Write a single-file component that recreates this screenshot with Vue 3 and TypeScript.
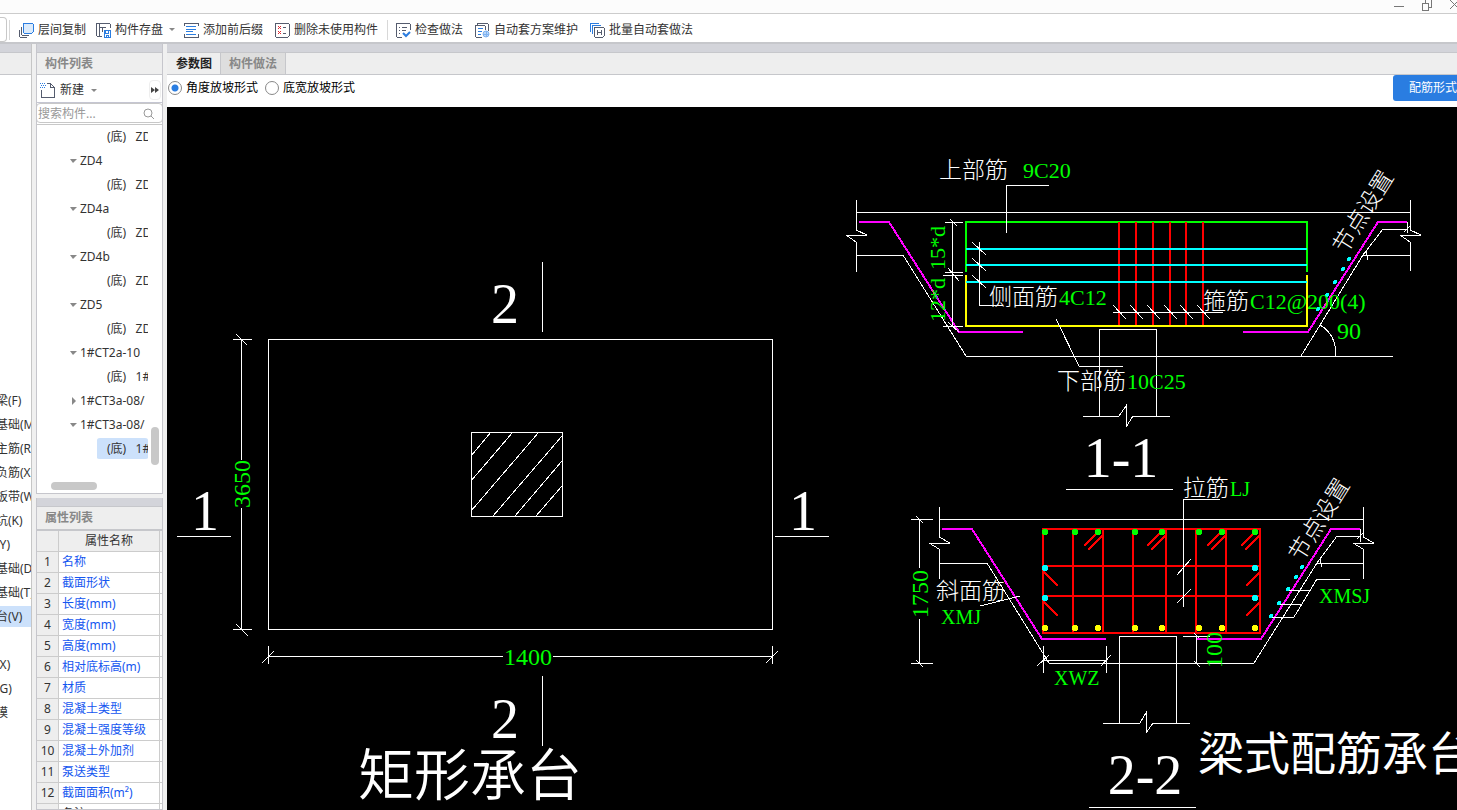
<script setup lang="ts">
import { ref } from 'vue'

interface TreeRow { label: string; kind: 'open' | 'closed' | 'leaf'; selected?: boolean }
interface Note { x: number; y: number; text: string; cls: string; rotate?: number }

const modules = ['梁(F)', '基础(M)', '主筋(R)', '负筋(X)', '板带(W)', '坑(K)', '(Y)', '基础(D)', '基础(T)', '台(V)', '', '(X)', '(G)', '模']

const tree: TreeRow[] = [
  { label: '(底)   ZD', kind: 'leaf' },
  { label: 'ZD4', kind: 'open' },
  { label: '(底)   ZD', kind: 'leaf' },
  { label: 'ZD4a', kind: 'open' },
  { label: '(底)   ZD', kind: 'leaf' },
  { label: 'ZD4b', kind: 'open' },
  { label: '(底)   ZD', kind: 'leaf' },
  { label: 'ZD5', kind: 'open' },
  { label: '(底)   ZD', kind: 'leaf' },
  { label: '1#CT2a-10', kind: 'open' },
  { label: '(底)   1#', kind: 'leaf' },
  { label: '1#CT3a-08/', kind: 'closed' },
  { label: '1#CT3a-08/', kind: 'open' },
  { label: '(底)   1#', kind: 'leaf', selected: true },
]

const props = ['名称', '截面形状', '长度(mm)', '宽度(mm)', '高度(mm)', '相对底标高(m)', '材质', '混凝土类型', '混凝土强度等级', '混凝土外加剂', '泵送类型', '截面面积(m²)', '备注']

const slope = ref('angle')
const search = ref('')

const stirrups = [1119, 1136, 1153, 1170, 1186, 1203]
const sideBars = [249, 265, 282]
const legs = [1073, 1103, 1133, 1166, 1196, 1226]
const barXs = [1045, 1075, 1098, 1135, 1162, 1199, 1222, 1255]
const hooks = [1103, 1166, 1226, 1260]
const slopeDots1 = [[1349, 259], [1343, 269], [1335, 282], [1327, 295], [1318, 309]]
const slopeDots2 = [[1302, 567], [1296, 577], [1288, 589], [1279, 603], [1271, 616]]
const sideDots = [[1045, 568], [1045, 598], [1255, 568], [1255, 598]]

const notes: Note[] = [
  { x: 505, y: 323, text: '2', cls: 'mark' },
  { x: 505, y: 738, text: '2', cls: 'mark' },
  { x: 205, y: 530, text: '1', cls: 'mark' },
  { x: 803, y: 530, text: '1', cls: 'mark' },
  { x: 1121, y: 477, text: '1-1', cls: 'mark' },
  { x: 1145, y: 794, text: '2-2', cls: 'mark' },
  { x: 528, y: 665, text: '1400', cls: 'dim' },
  { x: 250, y: 484, text: '3650', cls: 'dim', rotate: -90 },
  { x: 928, y: 594, text: '1750', cls: 'dim', rotate: -90 },
  { x: 1222, y: 650, text: '100', cls: 'dim', rotate: -90 },
  { x: 1349, y: 339, text: '90', cls: 'dim' },
  { x: 945, y: 248, text: '15*d', cls: 'code mid', rotate: -90 },
  { x: 945, y: 300, text: '12*d', cls: 'code mid', rotate: -90 },
  { x: 939, y: 178, text: '上部筋', cls: 'han' },
  { x: 1023, y: 178, text: '9C20', cls: 'code' },
  { x: 989, y: 305, text: '侧面筋', cls: 'han' },
  { x: 1059, y: 305, text: '4C12', cls: 'code' },
  { x: 1203, y: 309, text: '箍筋', cls: 'han' },
  { x: 1250, y: 309, text: 'C12@200(4)', cls: 'code' },
  { x: 1057, y: 389, text: '下部筋', cls: 'han' },
  { x: 1127, y: 389, text: '10C25', cls: 'code' },
  { x: 1183, y: 496, text: '拉筋', cls: 'han' },
  { x: 1230, y: 496, text: 'LJ', cls: 'tag' },
  { x: 936, y: 599, text: '斜面筋', cls: 'han' },
  { x: 941, y: 624, text: 'XMJ', cls: 'tag' },
  { x: 1054, y: 685, text: 'XWZ', cls: 'tag' },
  { x: 1319, y: 603, text: 'XMSJ', cls: 'tag' },
  { x: 1370, y: 216, text: '节点设置', cls: 'han mid', rotate: -58 },
  { x: 1326, y: 524, text: '节点设置', cls: 'han mid', rotate: -58 },
  { x: 358, y: 795, text: '矩形承台', cls: 'title' },
  { x: 1198, y: 770, text: '梁式配筋承台', cls: 'name' },
]
</script>

<template>
  <div class="app">
    <header class="titlebar">
      <button aria-label="最小化"><svg width="12" height="12"><path d="M1 6H11" /></svg></button>
      <button aria-label="还原"><svg width="12" height="12"><path d="M1 3H7V10H1ZM4 3V-1H10V7H7" /></svg></button>
      <button aria-label="关闭"><svg width="12" height="12"><path d="M1 0L10 9M10 0L1 9" /></svg></button>
    </header>

    <nav class="toolbar">
      <span class="stub"></span><span class="sep first"></span>
      <button class="tool copy">
        <svg width="16" height="16" class="ic"><path d="M3 5V12L4 13H11M1 8V14L2 15H9" /><rect class="bf" x="5" y="1" width="10" height="10" rx="1" /></svg>层间复制
      </button>
      <button class="tool store">
        <svg width="16" height="16" class="ic"><path d="M7 14H2L1 13V2L2 1H14L15 2V6M4 1V14M4 5H11M7 5V10" /><path class="b" d="M9 8H15V15H9ZM10 9V11H13V9M11 15V13H13V15" /></svg>构件存盘<i class="caret"></i>
      </button>
      <button class="tool affix">
        <svg width="16" height="16" class="ic"><path d="M1 4V1H15V4M1 12V15H15V12" /><path class="b" d="M3 4H13M3 7H13M3 9H10M3 12H13" /></svg>添加前后缀
      </button>
      <button class="tool del">
        <svg width="16" height="16" class="ic"><path d="M2 1H14L15 2V14L14 15H2L1 14V2ZM9 5H12M9 11H12" /><path class="r" d="M4 4L7 7M7 4L4 7M4 9L7 12M7 9L4 12" /></svg>删除未使用构件
      </button>
      <span class="sep"></span>
      <button class="tool">
        <svg width="16" height="16" class="ic"><path d="M7 15H2L1 14V2L2 1H14L15 2V8M4 5H5M7 5H12M4 8H5M7 8H11M4 11H5" /><path class="b w" d="M8 11L11 14L15 10" /></svg>检查做法
      </button>
      <button class="tool">
        <svg width="16" height="16" class="ic"><path d="M8 15H2L1 14V4L2 3H10L11 4V8M3 3V1H13L14 2V9" /><path class="b" d="M4 6H9M4 9H8M4 12H7" /><circle class="bl" cx="12" cy="12" r="3" /><path class="lt" d="M12 9V15M9 12H15" /></svg>自动套方案维护
      </button>
      <button class="tool">
        <svg width="16" height="16" class="ic"><path class="b" d="M1 10V1H10M3 12V3H12" /><path d="M6 5H14L15 6V14L14 15H6L5 14V6ZM8 8V13M12 8V13M8 10H12" /></svg>批量自动套做法
      </button>
    </nav>

    <main class="work">
      <aside class="dock modules">
        <div class="band"></div>
        <div class="head"></div>
        <ul>
          <li v-for="(m, i) in modules" :key="i" :class="{ on: i === 9 }">{{ m }}</li>
        </ul>
      </aside>

      <aside class="side">
        <section class="dock list">
          <div class="band"></div>
          <h2 class="head">构件列表</h2>
          <div class="newbar">
            <button class="tool">
              <svg width="16" height="16" class="ic"><path d="M1 8V15H14V5L10 1H7M10 1V5H14" /><path class="b dots" d="M0 1H6M1 3H6M0 5H6" /></svg>新建<i class="caret"></i>
            </button>
            <button class="more" aria-label="更多"><svg width="8" height="6"><path d="M0 0L4 3L0 6ZM4 0L8 3L4 6Z" /></svg></button>
          </div>
          <label class="search">
            <input v-model="search" type="text" placeholder="搜索构件..." aria-label="搜索构件" />
            <svg width="12" height="12"><circle cx="5" cy="5" r="4" /><path d="M8 8L11 11" /></svg>
          </label>
          <div class="tree">
            <ul>
              <li v-for="(t, i) in tree" :key="i" :class="[t.kind, { on: t.selected }]"><span>{{ t.label }}</span></li>
            </ul>
            <i class="vthumb"></i><i class="hthumb"></i>
          </div>
        </section>
        <section class="dock props">
          <div class="band"></div>
          <h2 class="head">属性列表</h2>
          <table>
            <thead><tr><th class="num"></th><th>属性名称</th><th class="val"></th></tr></thead>
            <tbody>
              <tr v-for="(p, i) in props" :key="p">
                <td class="num">{{ i + 1 }}</td><td :class="{ plain: i === 12 }">{{ p }}</td><td class="val"></td>
              </tr>
            </tbody>
          </table>
        </section>
      </aside>

      <section class="dock view">
        <div class="band"></div>
        <div class="head tabs">
          <button class="active">参数图</button><button>构件做法</button>
        </div>
        <div class="options">
          <label><input v-model="slope" type="radio" name="slope" value="angle" />角度放坡形式</label>
          <label><input v-model="slope" type="radio" name="slope" value="width" />底宽放坡形式</label>
          <button class="primary">配筋形式</button>
        </div>
        <div class="canvas">
          <svg class="cad" width="100%" height="100%">
            <g transform="translate(-167 -107)">
              <!-- plan -->
              <g class="w">
                <path d="M268 339H772V629H268ZM471 432H562V516H471Z" />
                <path d="M471 456L491 432M471 481L513 432M471 511L539 432M493 516L562 436M515 516L562 461M536 516L562 486" />
                <path d="M241 339V460M241 508V629M233 339H252M233 629H252M236 334L247 345M236 624L248 636" />
                <path d="M268 656H503M553 656H772M268 646V664M772 646V664M262 663L274 651M766 663L778 651" />
                <path d="M542 262V332M542 676V746M177 536H231M775 536H829" />
              </g>
              <!-- section 1-1 -->
              <path class="m" d="M859 222H889L959 332H1023M1243 332H1308L1378 222H1407" />
              <path class="g" d="M966 272V222H1307V272" />
              <path class="r" v-for="x in stirrups" :key="x" :d="`M${x} 222V326`" />
              <path class="y" d="M966 275V326H1307V275" />
              <path class="c" v-for="y in sideBars" :key="y" :d="`M966 ${y}H1307`" />
              <g class="w">
                <path d="M856 200V230L867 235H846L856 242V272M856 212H1410M856 255H903L966 356H1393" />
                <path d="M1410 200V230L1421 235H1400L1410 242V271M1301 356L1363 255H1410M1363 255L1383 229H1407M1407 222V233M1404 232L1411 225M1366 251L1368 260" />
                <path d="M952 222V326M945 222H963M945 272H963M943 275H963M943 326H963M950 219L957 226M948 268L959 281M948 322L959 332" />
                <path d="M1006 233V185H1049M979 242V305H1003M1056 319L1079 366H1123M1113 312H1223" />
                <path v-for="x in stirrups" :key="x" :d="`M${x - 6} 305L${x + 7} 319`" />
                <path v-for="y in sideBars" :key="y" :d="`M972 ${y - 7}L986 ${y + 6}`" />
                <path d="M1099 416V329H1156V416M1083 416H1119L1126 406V427L1133 416H1170M1066 489H1173" />
                <path d="M1320 325Q1336 334 1336 356" />
              </g>
              <circle class="cf" v-for="(d, i) in slopeDots1" :key="i" :cx="d[0]" :cy="d[1]" r="2" />
              <!-- section 2-2 -->
              <path class="m" d="M942 529H972L1042 639H1106M1196 639H1261L1331 529H1360" />
              <path class="r" d="M1043 529H1260V633H1043ZM1043 566H1260M1043 596H1260" />
              <path class="r" v-for="x in legs" :key="x" :d="`M${x} 529V633`" />
              <path class="r" v-for="x in hooks" :key="x" :d="`M${x - 19} 546L${x - 5} 532M${x - 15} 550L${x} 535`" />
              <path class="r" d="M1044 572L1058 586M1044 602L1058 616M1259 573L1246 586M1259 603L1246 616" />
              <circle class="gf" v-for="x in barXs" :key="x" :cx="x" cy="532" r="3" />
              <circle class="yf" v-for="x in barXs" :key="x" :cx="x" cy="628" r="3" />
              <circle class="cf" v-for="(d, i) in sideDots" :key="i" :cx="d[0]" :cy="d[1]" r="3" />
              <g class="w">
                <path d="M919 519V568M919 619V663M911 519H933M911 663H933M916 516L923 523M916 660L923 667" />
                <path d="M939 507V537L950 543H929L939 549V579M939 519H1363M939 563H987L1049 663H1254L1317 563H1363" />
                <path d="M1363 507V537L1374 543H1353L1363 549V579M1317 563L1337 536H1360M1360 529V542M1357 539L1364 532M1320 559L1322 567" />
                <path d="M1183 607V499H1220M1177 575L1191 559M1177 603L1191 589M980 606L1020 596" />
                <path d="M1119 723V636H1176V723M1103 723H1140L1146 713V733L1153 723H1190M1089 807H1196" />
                <path d="M1043 646V673M1106 646V673M1043 660H1106M1037 666L1049 655M1101 666L1111 655" />
                <path d="M1196 636V663M1183 636H1210M1194 633L1199 638M1194 661L1200 667" />
                <path d="M1288 590H1310M1279 604H1302M1271 617H1294L1317 579H1350" />
              </g>
              <circle class="cf" v-for="(d, i) in slopeDots2" :key="i" :cx="d[0]" :cy="d[1]" r="2" />
              <text v-for="(n, i) in notes" :key="i" :class="n.cls" :x="n.x" :y="n.y" :transform="n.rotate ? `rotate(${n.rotate} ${n.x} ${n.y})` : undefined">{{ n.text }}</text>
            </g>
          </svg>
        </div>
      </section>
    </main>
  </div>
</template>

<style>
body { margin: 0; overflow: hidden; }
</style>

<style scoped>
.app {
  height: 100vh;
  display: flex;
  flex-direction: column;
  overflow: hidden;
  background: #f0f0f0;
  color: #333;
  font: 12px/16px "Noto Sans", "Noto Sans CJK SC", sans-serif;
}
* { box-sizing: border-box; }
button { font: inherit; color: inherit; border: 0; background: none; padding: 0; white-space: nowrap; }
ul { list-style: none; margin: 0; padding: 0; }
h2 { margin: 0; font-size: 12px; }

.titlebar {
  flex: 0 0 14px;
  display: flex;
  justify-content: flex-end;
  gap: 16px;
  margin-right: -4px;
  background: #fcfcfc;
  border-bottom: 1px solid #ccc;
}
.titlebar button { height: 12px; display: flex; }
.titlebar svg { fill: none; stroke: #777; stroke-width: 1; shape-rendering: crispEdges; }

.toolbar {
  flex: 0 0 30px;
  display: flex;
  align-items: center;
  background: #fff;
  border-bottom: 2px solid #c6c7cb;
  padding-top: 3px;
}
.stub { width: 7px; height: 25px; border: 1px solid #c8c8c8; border-left: 0; border-radius: 0 4px 4px 0; }
.sep { width: 1px; height: 20px; margin: 0 7px 0 -3px; background: #d8d8d8; }
.sep.first { margin: 0 8px 0 2px; }
.tool { display: flex; align-items: center; gap: 4px; height: 20px; margin-right: 11px; }
.tool.copy { margin-right: 9px; }
.tool.store { margin-right: 8px; }
.tool.del { margin-right: 12px; }
.caret { width: 5px; border: 3px solid transparent; border-top: 3px solid #888; border-bottom: 0; margin-left: 2px; }
.ic { flex: none; fill: none; stroke: #555c6e; stroke-width: 1; shape-rendering: crispEdges; }
.ic .b { stroke: #2b7de0; }
.ic .w { stroke-width: 2; shape-rendering: auto; }
.ic .bf { stroke: #2b7de0; fill: #dcebfb; }
.ic .bl { stroke: #7fb2f0; fill: #b9d6f8; shape-rendering: auto; }
.ic .lt { stroke: #7fb2f0; }
.ic .r { stroke: #e0252f; }
.ic .dots { stroke-width: 1; stroke-dasharray: 1 1; }

.work { flex: 1; min-height: 0; display: grid; grid-template-columns: 32px 127px minmax(0, 1fr); column-gap: 4px; }
.dock { display: flex; flex-direction: column; min-height: 0; overflow: hidden; background: #fff; }
.band { flex: 0 0 9px; background: #d3d4da; border-bottom: 1px solid #c6c7cb; }
.head { flex: 0 0 22px; background: #eee; border-bottom: 1px solid #c6c7cb; color: #888; font-weight: 700; line-height: 21px; padding-left: 8px; }

.modules { border-right: 1px solid #c6c6c6; }
.modules ul { padding-top: 314px; }
.modules li { height: 24px; line-height: 24px; text-indent: -4px; white-space: nowrap; }
.modules li.on { background: linear-gradient(#cce1fb, #cce1fb) 0 1px / 100% 21px no-repeat; }

.side { display: flex; flex-direction: column; min-height: 0; gap: 4px; }
.side .dock { border: 1px solid #c6c6cc; border-top: 0; }
.list { flex: 0 0 450px; }
.newbar { flex: 0 0 28px; display: flex; align-items: center; justify-content: space-between; padding: 3px 0 0 3px; border-bottom: 1px solid #c5c6d2; }
.newbar .tool { margin: 0; }
.newbar .caret { margin-left: 3px; }
.more { width: 12px; height: 20px; margin-right: 1px; border: 1px solid #eee; border-radius: 4px; display: flex; align-items: center; justify-content: center; }
.more svg { flex: none; fill: #444; }
.search { flex: 0 0 20px; margin: 0 -1px 1px; display: flex; align-items: center; border: 1px solid #c8c8c8; border-radius: 4px; padding: 1px 7px 0 1px; }
.search input { flex: 1; min-width: 0; border: 0; outline: 0; padding: 0; font: inherit; height: 16px; background: none; }
.search input::placeholder { color: #999; opacity: 1; }
.search svg { fill: none; stroke: #999; }
.tree { flex: 1; min-height: 0; position: relative; border-top: 1px solid #c8c8c8; }
.tree ul { width: 111px; overflow: hidden; }
.tree li { height: 24px; line-height: 24px; display: flex; align-items: center; white-space: pre; padding-left: 33px; gap: 4px; }
.tree li span { flex: none; }
.tree li::before { content: ""; flex: none; border: 4px solid transparent; margin-right: -1px; }
.tree .open::before { border-top: 4px solid #888; border-bottom: 0; border-left-width: 3px; border-right-width: 4px; }
.tree .closed::before { border-left: 4px solid #888; border-right: 0; margin: 0 0 0 2px; }
.tree .leaf { padding-left: 70px; }
.tree .leaf::before { display: none; }
.tree .on { margin-left: 60px; padding-left: 10px; border-radius: 3px; background: #cce1fb; background-clip: padding-box; border-top: 1px solid transparent; border-bottom: 2px solid transparent; line-height: 21px; }
.vthumb, .hthumb { position: absolute; background: #c8c8c8; border-radius: 4px; }
.vthumb { right: 3px; bottom: 28px; width: 8px; height: 38px; }
.hthumb { left: 14px; bottom: 3px; width: 46px; height: 8px; }

.props { flex: 1; }
.props .head { flex-basis: 24px; border-bottom-width: 2px; line-height: 22px; }
table { table-layout: fixed; width: 100%; border-collapse: separate; border-spacing: 0; }
th, td { height: 21px; line-height: 20px; padding: 0 0 0 3px; border-right: 1px solid #ccc; border-bottom: 1px solid #ccc; font-weight: 400; text-align: left; white-space: nowrap; overflow: hidden; }
th { background: #eee; text-align: center; color: #333; padding: 0; }
td { color: #1456f0; }
td.plain { color: #333; }
.num { width: 22px; background: #eee; text-align: center; color: #333; padding: 0; }
.val { width: 2px; border-right: 0; padding: 0; }

.tabs { display: flex; padding: 0; }
.tabs button { height: 21px; line-height: 20px; padding: 0 8px; font-weight: 700; color: #888; background: #dedede; border-right: 1px solid #c6c7cb; }
.tabs .active { color: #222; background: #eee; padding: 0 8px 0 9px; }
.options { flex: 0 0 32px; display: flex; align-items: flex-start; background: #fff; color: #000; }
.options label { display: flex; align-items: center; height: 25px; margin: 0 6px 0 1px; gap: 4px; }
.options input { appearance: none; width: 14px; height: 14px; margin: 0; border: 1px solid #888; border-radius: 50%; background: #fff; }
.options input:checked { background: radial-gradient(#2a7de1 0 3px, #fff 4px); }
.primary { margin: 0 -16px 0 auto; padding: 0 16px; height: 26px; border-radius: 3px; background: #2a7de1; color: #fff; }

.canvas { flex: 1; min-height: 0; background: #000; overflow: hidden; }
.cad { display: block; }
.cad path { fill: none; stroke-width: 2; shape-rendering: crispEdges; }
.cad circle { shape-rendering: crispEdges; }
.cad .w path { stroke: #fff; stroke-width: 1; }
.cad .m { stroke: #f0f; }
.cad .g { stroke: #0f0; }
.cad .r { stroke: #f00; }
.cad .y { stroke: #ff0; }
.cad .c { stroke: #0ff; }
.cf { fill: #0ff; }
.gf { fill: #0f0; }
.yf { fill: #ff0; }
text { fill: #fff; font-family: "Liberation Serif", "Noto Sans CJK SC", serif; }
.mark { font-size: 56px; text-anchor: middle; }
.dim { font-size: 24px; fill: #0f0; text-anchor: middle; }
.code { font-size: 22px; fill: #0f0; }
.tag { font-size: 20px; fill: #0f0; }
.han { font-size: 23px; font-weight: 300; }
.mid { text-anchor: middle; }
.title { font-size: 56px; font-weight: 350; }
.name { font-size: 46px; }
</style>
